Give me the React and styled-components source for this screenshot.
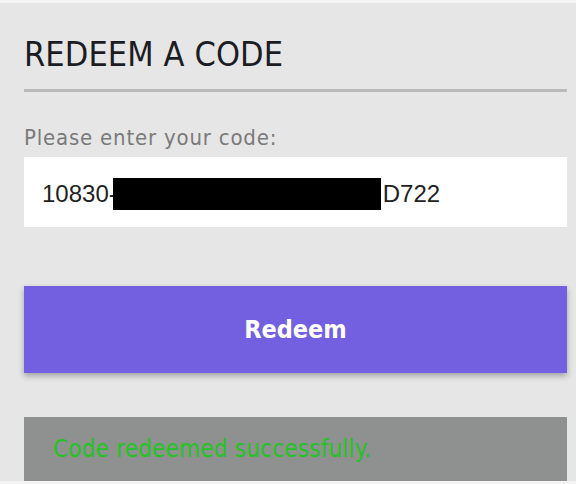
import React from "react";
import styled, { createGlobalStyle } from "styled-components";

const GlobalStyle = createGlobalStyle`
  html, body {
    margin: 0;
    padding: 0;
    background: #f4f4f4;
  }
`;

const App = () => {
  return (
    <>
      <GlobalStyle />
      <Page>
        <Title>REDEEM A CODE</Title>
        <Divider />
        <Label>Please enter your code:</Label>
        <CodeField>
          10830-<Redacted />D722
        </CodeField>
        <RedeemButton>Redeem</RedeemButton>
        <Message>Code redeemed successfully.</Message>
      </Page>
    </>
  );
};

const Page = styled.div`
  margin-top: 3px;
  height: 478px;
  background: #e6e6e6;
  padding: 31px 9px 0 24px;
  box-sizing: border-box;
  display: flex;
  flex-direction: column;
  font-family: "DejaVu Sans Condensed", "DejaVu Sans", sans-serif;
`;

const Title = styled.h1`
  margin: 0;
  font-size: 34px;
  line-height: 40px;
  font-weight: normal;
  letter-spacing: 0.1px;
  color: #1c1c24;
`;

const Divider = styled.div`
  margin-top: 15px;
  height: 3px;
  background: #bababa;
`;

const Label = styled.div`
  margin-top: 33px;
  font-size: 22px;
  line-height: 26px;
  font-weight: 300;
  letter-spacing: 0.8px;
  color: #7a7a7a;
`;

const CodeField = styled.div`
  margin-top: 6px;
  height: 70px;
  box-sizing: border-box;
  padding: 3px 0 0 18px;
  background: #ffffff;
  display: flex;
  align-items: center;
  font-family: "Liberation Sans", Arial, sans-serif;
  font-size: 24px;
  color: #222;
`;

const Redacted = styled.span`
  display: inline-block;
  width: 268px;
  height: 32px;
  margin-left: -4px;
  margin-right: 2px;
  background: #000;
`;

const RedeemButton = styled.button`
  margin-top: 59px;
  height: 87px;
  border: none;
  background: #7360e0;
  color: #ffffff;
  font-family: "DejaVu Sans Condensed", "DejaVu Sans", sans-serif;
  font-size: 25px;
  font-weight: bold;
  box-shadow: 0 3px 6px rgba(0, 0, 0, 0.3);
  cursor: pointer;
`;

const Message = styled.div`
  margin-top: 44px;
  height: 64px;
  background: #8f9090;
  display: flex;
  align-items: center;
  padding-left: 29px;
  font-size: 24px;
  letter-spacing: 0.2px;
  color: #22c422;
`;

export default App;
